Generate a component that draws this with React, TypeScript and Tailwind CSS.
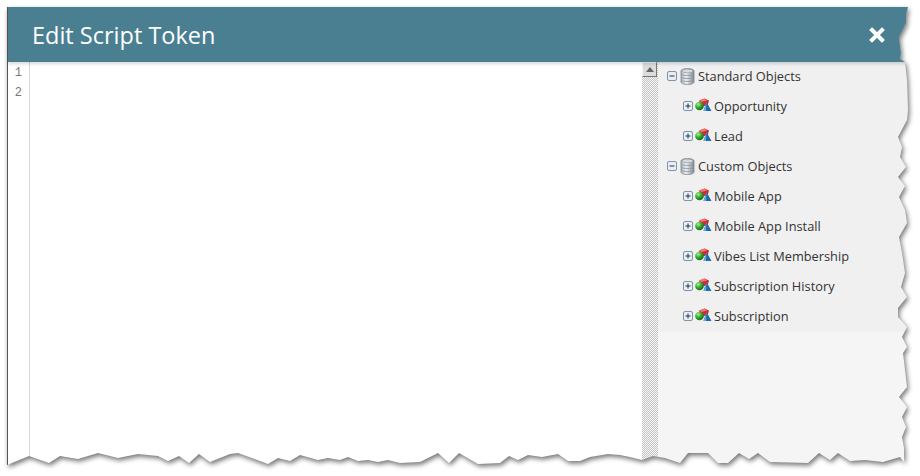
import { useId } from "react";

const tornEdge =
  "M7 7 L908 7 L906 15 L906 23 L899 37 L901 53 L900 59 L905 62 L907 80 L908 110 L907 120 L898 137 L902 147 L900 157 L906 167 L898 177 L905 186 L899 197 L905 210 L907 223 L899 237 L902 253 L905 273 L901 287 L907 297 L898 308 L898 317 L907 327 L902 337 L907 347 L903 353 L907 387 L899 397 L907 407 L902 417 L906 427 L902 437 L904 448 L904 462 L900 457 L883 462 L865 460 L850 461 L838 453 L830 460 L819 453 L808 463 L770 462 L758 453 L749 459 L739 453 L728 463 L718 463 L708 453 L688 453 L680 463 L665 458 L653 456 L642 460 L630 457 L620 455 L608 454 L590 457 L580 461 L568 461 L558 454 L542 457 L528 455 L518 460 L509 456 L500 463 L478 464 L459 453 L449 463 L438 453 L420 462 L400 463 L388 460 L378 462 L368 460 L358 461 L348 457 L340 460 L328 458 L318 460 L300 455 L290 461 L278 458 L268 464 L238 453 L230 454 L210 462 L199 454 L189 463 L179 456 L168 461 L158 456 L138 454 L118 458 L98 453 L78 459 L60 456 L49 463 L29 456 L7 465 Z";

const tree = [
  {
    name: "Standard Objects",
    children: ["Opportunity", "Lead"],
  },
  {
    name: "Custom Objects",
    children: ["Mobile App", "Mobile App Install", "Vibes List Membership", "Subscription History", "Subscription"],
  },
];

function Toggle({ open }: { open?: boolean }) {
  return (
    <svg width="10" height="10" viewBox="0 0 10 10" className="shrink-0 -translate-y-px">
      <rect x="0.5" y="0.5" width="9" height="9" rx="1.5" fill="#e8eef4" stroke="#7f93a8" />
      <path d="M2.500 5h5" stroke="#1f3550" strokeWidth="1" />
      {!open && <path d="M5 2.500v5" stroke="#1f3550" strokeWidth="1" />}
    </svg>
  );
}

function DbIcon() {
  const id = useId();
  return (
    <svg width="15" height="17" viewBox="0 0 15 17" className="shrink-0 -translate-y-px">
      <defs>
        <linearGradient id={id} x1="0" x2="1" y1="0" y2="0">
          <stop offset="0" stopColor="#aab2ba" />
          <stop offset="0.4" stopColor="#eef1f3" />
          <stop offset="1" stopColor="#7f8992" />
        </linearGradient>
      </defs>
      <path
        d="M1 3c0-1.500 3-2.500 6.500-2.500S14 1.500 14 3v11c0 1.500-3 2.500-6.500 2.500S1 15.500 1 14z"
        fill={`url(#${id})`}
        stroke="#7c858e"
        strokeWidth="0.8"
      />
      <path d="M1.500 6.500c1.500 1.300 10.500 1.300 12 0M1.500 9.500c1.500 1.300 10.500 1.300 12 0M1.500 12.500c1.500 1.300 10.500 1.300 12 0" fill="none" stroke="#8b949c" strokeWidth="0.9" />
      <ellipse cx="7.500" cy="3" rx="5.500" ry="1.800" fill="#d5dade" stroke="#8b949c" strokeWidth="0.6" />
    </svg>
  );
}

function ObjectIcon() {
  const id = useId();
  return (
    <svg width="17" height="14" viewBox="0 0 17 14" className="shrink-0 -translate-y-[2px]">
      <defs>
        <radialGradient id={id} cx="0.35" cy="0.3" r="0.8">
          <stop offset="0" stopColor="#a4f08c" />
          <stop offset="0.5" stopColor="#2fa52c" />
          <stop offset="1" stopColor="#0d5c14" />
        </radialGradient>
      </defs>
      <path d="M4 2.500 9.500 0.500 14 2.500 12.500 8 6 8z" fill="#d42a2e" />
      <path d="M4 2.500 9.500 0.500 12 2.500 6.500 4z" fill="#f0787a" />
      <path d="M11.500 4 16.500 13H8.500z" fill="#1d69b0" />
      <path d="M11.500 4 11 13H8.500z" fill="#6aa9da" />
      <circle cx="4.500" cy="8" r="4.300" fill={`url(#${id})`} />
    </svg>
  );
}

export default function App() {
  const clipId = useId();
  const blurId = useId();

  return (
    <div className="relative w-[920px] h-[476px] overflow-hidden bg-white pt-[7px] pl-[7px] font-['Open_Sans',sans-serif]">
      <div className="flex h-[460px] w-[901px] flex-col border-l border-[#555]">
        <header className="z-10 flex h-[55px] shrink-0 items-center justify-between bg-[#4a7f92] pl-[24px] pr-[23px] shadow-[0_2px_3px_rgba(0,0,0,0.15)]">
          <h1 className="pt-[1px] text-[23.5px] leading-[55px] text-white">Edit Script Token</h1>
          <svg width="16" height="16" viewBox="0 0 16 16">
            <path d="M3 3l10 10M13 3L3 13" stroke="#fff" strokeWidth="4" strokeLinecap="square" />
          </svg>
        </header>

        <div className="flex min-h-0 flex-1">
          <div className="w-[22px] shrink-0 border-r border-[#d8d8d8] bg-white pt-[1px] pr-[7px] text-right font-['Liberation_Mono',monospace] text-[12px] leading-[20px] text-[#777]">
            <div>1</div>
            <div>2</div>
          </div>

          <div className="flex-1 bg-white" />

          <div className="w-[16px] shrink-0 bg-[repeating-conic-gradient(#c4c4c4_0_25%,#f6f6f6_0_50%)] bg-[length:2px_2px]">
            <div className="flex h-[15px] w-[15px] items-center justify-center border border-t-[#f4f4f4] border-l-[#f4f4f4] border-r-[#777] border-b-[#777] bg-[#dcdcdc]">
              <div className="h-0 w-0 border-x-[4px] border-b-[5px] border-x-transparent border-b-[#666]" />
            </div>
          </div>

          <aside className="flex w-[250px] shrink-0 flex-col bg-[#f5f5f5]">
            <ul className="bg-[#f0f0f0] pl-[9px] text-[12.8px] text-[#333]">
              {tree.map((group) => (
                <li key={group.name}>
                  <div className="flex h-[30px] items-center gap-[3px]">
                    <Toggle open />
                    <DbIcon />
                    <span>{group.name}</span>
                  </div>
                  <ul className="pl-[16px]">
                    {group.children.map((child) => (
                      <li key={child} className="flex h-[30px] items-center gap-[2px]">
                        <Toggle />
                        <ObjectIcon />
                        <span>{child}</span>
                      </li>
                    ))}
                  </ul>
                </li>
              ))}
            </ul>
          </aside>
        </div>
      </div>

      {/* torn paper edge + shadow, sits over the dialog */}
      <svg width="920" height="476" className="absolute inset-0 z-20">
        <defs>
          <clipPath id={clipId}>
            <path clipRule="evenodd" d={`M0 0H920V476H0Z ${tornEdge}`} />
          </clipPath>
          <filter id={blurId} x="-5%" y="-5%" width="110%" height="110%">
            <feGaussianBlur stdDeviation="2.6" />
          </filter>
        </defs>
        <path fillRule="evenodd" fill="#fff" d={`M0 0H920V476H0Z ${tornEdge}`} />
        <g clipPath={`url(#${clipId})`}>
          <path d={tornEdge} transform="translate(1.5 2.5)" fill="#000" opacity="0.55" filter={`url(#${blurId})`} />
        </g>
      </svg>
    </div>
  );
}
